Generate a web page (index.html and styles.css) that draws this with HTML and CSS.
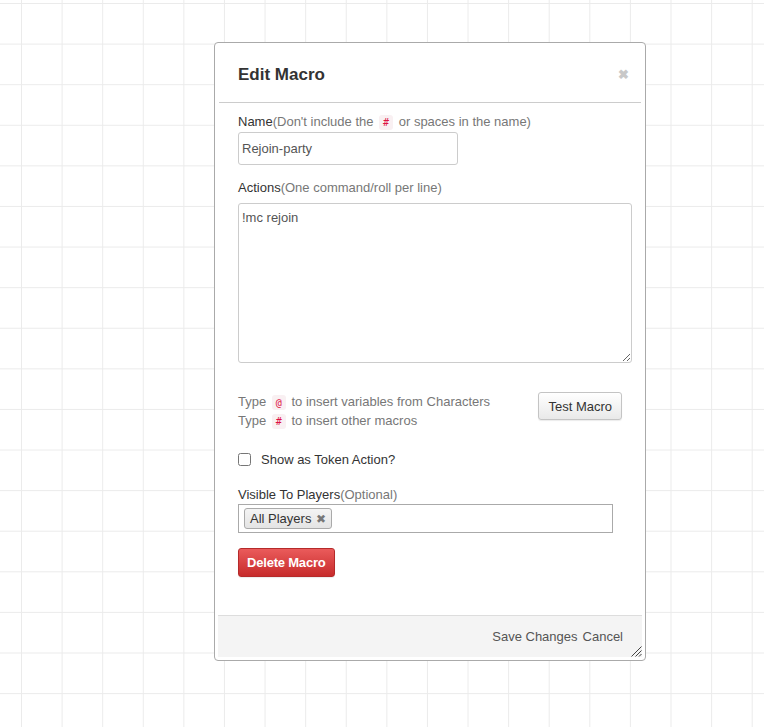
FILE: index.html
```html
<!DOCTYPE html>
<html>
<head>
<meta charset="utf-8">
<link rel="stylesheet" href="styles.css">
</head>
<body>
<div class="canvas">
  <div class="dialog">
    <div class="dlg-head">
      <h2 class="dlg-title">Edit Macro</h2>
      <span class="dlg-close">✖</span>
    </div>
    <div class="dlg-body">
      <div class="field">
        <label class="lbl">Name<span class="hint">(Don't include the <code class="code">#</code> or spaces in the name)</span></label>
        <input class="txt name-input" type="text" value="Rejoin-party">
      </div>
      <div class="field">
        <label class="lbl">Actions<span class="hint">(One command/roll per line)</span></label>
        <textarea class="txt actions">!mc rejoin</textarea>
      </div>
      <div class="help-row">
        <div class="help">
          <div>Type <code class="code">@</code> to insert variables from Characters</div>
          <div>Type <code class="code">#</code> to insert other macros</div>
        </div>
        <button class="btn">Test Macro</button>
      </div>
      <label class="check-row"><input type="checkbox" class="chk"><span>Show as Token Action?</span></label>
      <div class="field">
        <label class="lbl">Visible To Players<span class="hint">(Optional)</span></label>
        <div class="select">
          <span class="tag">All Players <span class="tag-x">✖</span></span>
        </div>
      </div>
      <button class="btn btn-danger">Delete Macro</button>
    </div>
    <div class="dlg-foot">
      <span class="foot-btn">Save Changes</span>
      <span class="foot-btn">Cancel</span>
      <svg class="grip" width="12" height="12" viewBox="0 0 12 12"><path d="M11.5 1.5 L1.5 11.5 M11.5 5.5 L5.5 11.5 M11.5 9 L9 11.5" stroke="#444" stroke-width="1" fill="none"/></svg>
    </div>
  </div>
</div>
</body>
</html>
```

FILE: styles.css
```css
html, body {
  margin: 0;
  padding: 0;
}
body {
  width: 764px;
  height: 727px;
  overflow: hidden;
  font-family: "Liberation Sans", Arial, sans-serif;
  font-size: 13px;
  color: #555;
}
.canvas {
  position: relative;
  width: 764px;
  height: 727px;
  background-color: #fff;
  background-image:
    linear-gradient(to right, #ebebeb 0, #ebebeb 1px, transparent 1px),
    linear-gradient(to bottom, #ebebeb 0, #ebebeb 1px, transparent 1px);
  background-size: 40.6px 40.6px;
  background-position: 21px 3px;
}
.dialog {
  position: absolute;
  left: 214px;
  top: 42px;
  width: 424px;
  height: 611px;
  padding: 3px;
  border: 1px solid #aaa;
  border-radius: 4px;
  background: #fff;
  display: flex;
  flex-direction: column;
}
.dlg-head {
  height: 56px;
  border-bottom: 1px solid #ccc;
  display: flex;
  align-items: center;
  justify-content: space-between;
  padding: 0 12px 0 19px;
  margin: 0 1px;
}
.dlg-title {
  margin: 0;
  font-size: 17px;
  font-weight: bold;
  color: #333;
  padding-top: 1px;
}
.dlg-close {
  color: #c8c8c8;
  font-size: 13px;
  font-weight: bold;
  padding-top: 1px;
}
.dlg-body {
  flex: 1;
  padding: 10px 20px 0 20px;
  display: flex;
  flex-direction: column;
  align-items: flex-start;
}
.field {
  display: flex;
  flex-direction: column;
  align-items: flex-start;
}
.lbl {
  line-height: 18px;
  color: #333;
}
.hint {
  color: #777;
}
.code {
  font-family: "DejaVu Sans Mono", monospace;
  font-size: 10px;
  color: #dd1144;
  background: #f9f0f2;
  border-radius: 3px;
  padding: 2px 4px;
  margin: 0 2px;
}
.txt {
  box-sizing: border-box;
  border: 1px solid #ccc;
  border-radius: 3px;
  font-family: "Liberation Sans", Arial, sans-serif;
  font-size: 13px;
  color: #555;
  background: #fff;
  margin: 0;
}
.name-input {
  width: 220px;
  height: 33px;
  padding: 4px 3px;
  margin-top: 0;
  margin-bottom: 14px;
}
.actions {
  width: 394px;
  height: 160px;
  padding: 6px 3px;
  margin-top: 6px;
  resize: vertical;
}
.help-row {
  margin-top: 30px;
  width: 384px;
  display: flex;
  justify-content: space-between;
  align-items: flex-start;
}
.help {
  line-height: 18px;
  color: #777;
}
.btn {
  box-sizing: border-box;
  height: 28px;
  padding: 0 9px;
  margin-top: -1px;
  font-family: "Liberation Sans", Arial, sans-serif;
  font-size: 13px;
  color: #333;
  border: 1px solid #c4c4c4;
  border-radius: 3px;
  background: linear-gradient(#fff, #e9e9e9);
  box-shadow: 0 1px 1px rgba(0,0,0,0.08);
}
.check-row {
  margin-top: 19px;
  display: flex;
  align-items: center;
  height: 18px;
  color: #333;
}
.chk {
  margin: 0 10px 0 0;
  width: 13px;
  height: 13px;
}
.check-row + .field {
  margin-top: 18px;
}
.select {
  box-sizing: border-box;
  width: 375px;
  height: 29px;
  border: 1px solid #aaa;
  padding: 3px 5px;
  display: flex;
  align-items: flex-start;
}
.tag {
  box-sizing: border-box;
  height: 21px;
  line-height: 19px;
  padding: 0 5px;
  border: 1px solid #aaa;
  border-radius: 3px;
  background: linear-gradient(#f4f4f4, #e4e4e4);
  color: #333;
}
.tag-x {
  color: #777;
  font-size: 12px;
  margin-left: 1px;
}
.btn-danger {
  margin-top: 15px;
  height: 29px;
  padding: 0 8px;
  color: #fff;
  font-weight: bold;
  letter-spacing: -0.2px;
  border: 1px solid #b52a2a;
  background: linear-gradient(#ea5b5b, #c72b2b);
}
.dlg-foot {
  position: relative;
  height: 41px;
  border-top: 1px solid #ddd;
  background: #f4f4f4;
  display: flex;
  align-items: center;
  justify-content: flex-end;
  gap: 5px;
  padding-right: 19px;
  color: #555;
}
.grip {
  position: absolute;
  right: 0;
  bottom: 0;
}
```
